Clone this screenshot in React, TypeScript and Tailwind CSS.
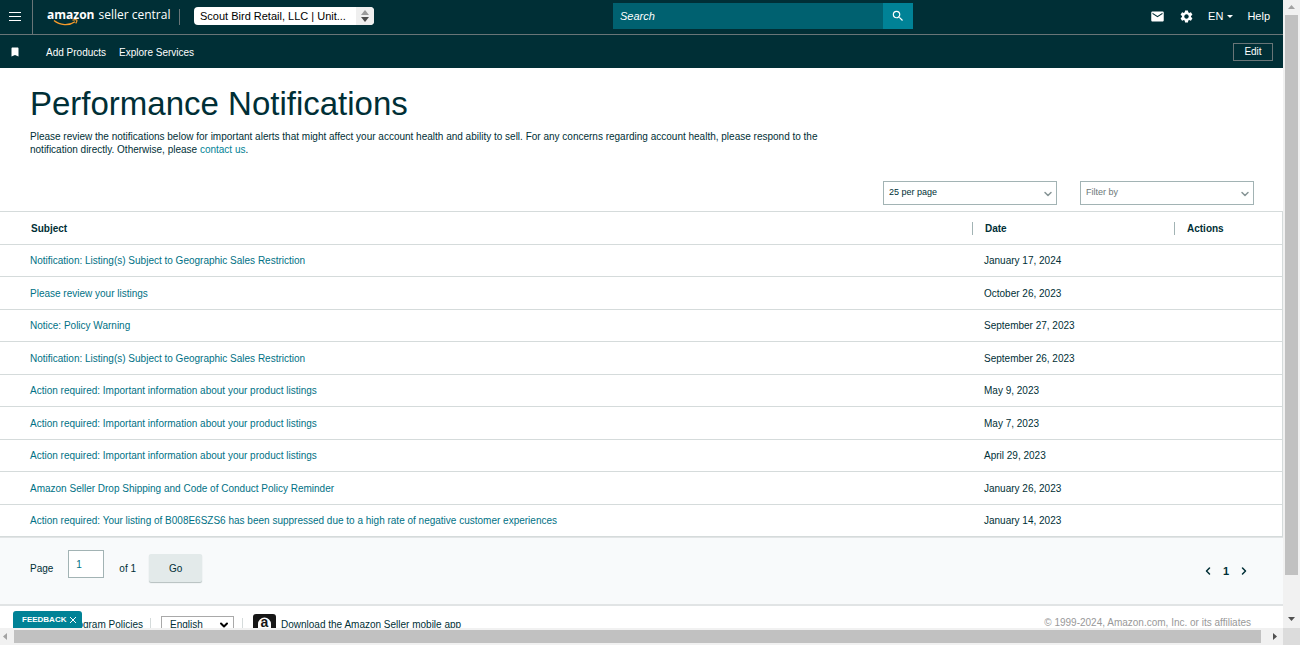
import { ChevronDown, ChevronLeft, ChevronRight } from 'lucide-react'
import { MdBookmark, MdEmail, MdSearch, MdSettings } from 'react-icons/md'

const notifications = [
  { subject: 'Notification: Listing(s) Subject to Geographic Sales Restriction', date: 'January 17, 2024' },
  { subject: 'Please review your listings', date: 'October 26, 2023' },
  { subject: 'Notice: Policy Warning', date: 'September 27, 2023' },
  { subject: 'Notification: Listing(s) Subject to Geographic Sales Restriction', date: 'September 26, 2023' },
  { subject: 'Action required: Important information about your product listings', date: 'May 9, 2023' },
  { subject: 'Action required: Important information about your product listings', date: 'May 7, 2023' },
  { subject: 'Action required: Important information about your product listings', date: 'April 29, 2023' },
  { subject: 'Amazon Seller Drop Shipping and Code of Conduct Policy Reminder', date: 'January 26, 2023' },
  {
    subject:
      'Action required: Your listing of B008E6SZS6 has been suppressed due to a high rate of negative customer experiences',
    date: 'January 14, 2023',
  },
]

function Logo() {
  return (
    <a
      href="#"
      className="relative mb-1 ml-3.5 flex items-baseline gap-1 font-['Open_Sans',sans-serif] text-[12px] leading-4 text-white"
    >
      <span className="font-bold">amazon</span>
      <span>seller central</span>
      <svg className="absolute left-1.5 top-3 h-2 w-7" viewBox="0 0 28 8" fill="none" stroke="#f79a2a" aria-hidden>
        <path d="M1 1.500c6 5 15 5.500 21 1.200" strokeWidth="1.400" />
        <path d="M19.500 1.200c1.600-.5 4-.4 4.300 0 .3.600-.2 2-1.100 3.200" strokeWidth="1.200" />
      </svg>
    </a>
  )
}

function TopBar() {
  return (
    <div className="flex h-[35px] items-center border-b border-[#697577]">
      <div className="flex h-full w-[613px] shrink-0 items-center">
        <button type="button" aria-label="Menu" className="flex h-full w-[33px] items-center border-r border-[#697577] pl-[9px]">
          <svg className="h-3 w-3" viewBox="0 0 12 12" fill="#fff" aria-hidden>
            <path d="M0 1h12v1H0zM0 5h12v1H0zM0 9h12v1H0z" />
          </svg>
        </button>
        <Logo />
        <span className="ml-auto h-4 w-px bg-[#697577]" />
        <div className="relative mb-0.5 ml-3.5 mr-[239px] flex h-[18px] w-[180px]">
          <select
            aria-label="Account"
            className="w-full appearance-none truncate rounded-sm bg-white pl-1.5 pr-5 text-[11px] leading-[18px] text-black"
          >
            <option>Scout Bird Retail, LLC | Unit...</option>
          </select>
          <span className="pointer-events-none absolute inset-y-0 right-0 flex w-[18px] items-center justify-center rounded-r-sm bg-[#efefef]">
            <svg className="h-3 w-2" viewBox="0 0 8 12" aria-hidden>
              <path d="M0 5h8L4 0z" fill="#9a9a9a" />
              <path d="M0 7h8l-4 5z" fill="#4d4d4d" />
            </svg>
          </span>
        </div>
      </div>
      <form className="mb-0.5 flex h-[26px] w-[300px] shrink-0">
        <input
          type="text"
          aria-label="Search"
          placeholder="Search"
          className="min-w-0 flex-1 bg-[#006170] px-[7px] text-[11px] italic text-white placeholder:text-white"
        />
        <button type="button" aria-label="Submit search" className="flex w-[30px] items-center justify-center bg-[#008296] text-white">
          <MdSearch size={14} />
        </button>
      </form>
      <div className="ml-auto flex items-center pb-0.5 pr-[13px] text-[11px] text-white">
        <a href="#" aria-label="Messages">
          <MdEmail size={15} />
        </a>
        <a href="#" aria-label="Settings" className="ml-3.5">
          <MdSettings size={15} />
        </a>
        <button type="button" className="ml-3.5 flex items-center gap-1">
          EN
          <svg className="h-[3px] w-1.5" viewBox="0 0 6 3" fill="#fff" aria-hidden>
            <path d="M0 0h6L3 3z" />
          </svg>
        </button>
        <a href="#" className="ml-3.5">
          Help
        </a>
      </div>
    </div>
  )
}

function BookmarkBar() {
  return (
    <nav className="flex h-[33px] items-center text-[10px] text-white">
      <MdBookmark size={12} className="ml-[9px]" />
      <a href="#" className="ml-[25px] pt-0.5">
        Add Products
      </a>
      <a href="#" className="ml-[13px] pt-0.5">
        Explore Services
      </a>
      <button type="button" className="ml-auto mr-2.5 h-[18px] w-10 border border-[#697577]">
        Edit
      </button>
    </nav>
  )
}

function FilterSelect({ label, value, className }: { label: string; value: string; className: string }) {
  return (
    <div className="relative flex h-6 w-[174px]">
      <select
        aria-label={label}
        className={`w-full appearance-none border border-[#a2b3b4] bg-white pb-0.5 pl-[5px] text-[9px] ${className}`}
      >
        <option>{value}</option>
      </select>
      <ChevronDown size={12} className="pointer-events-none absolute right-[3px] top-[7px] text-[#879596]" strokeWidth={3} />
    </div>
  )
}

function NotificationTable() {
  return (
    <table className="w-full table-fixed border-separate border-spacing-0 border-r border-t border-[#d5dbdb] text-left">
      <colgroup>
        <col />
        <col className="w-[202px]" />
        <col className="w-[108px]" />
      </colgroup>
      <thead>
        <tr className="h-[33px]">
          <th className="border-b border-[#d5dbdb] py-0 pl-[31px] font-bold">Subject</th>
          {['Date', 'Actions'].map((name) => (
            <th key={name} className="border-b border-[#d5dbdb] p-0 font-bold">
              <span className="block border-l border-[#a2b3b4] pl-3">{name}</span>
            </th>
          ))}
        </tr>
      </thead>
      <tbody>
        {notifications.map((item) => (
          <tr key={item.date} className="odd:h-8 even:h-[33px]">
            <td className="border-b border-[#d5dbdb] py-0 pl-[30px]">
              <a href="#" className="text-[#007185]">
                {item.subject}
              </a>
            </td>
            <td className="border-b border-[#d5dbdb] py-0 pl-3">{item.date}</td>
            <td className="border-b border-[#d5dbdb] p-0" />
          </tr>
        ))}
      </tbody>
    </table>
  )
}

function Pagination() {
  return (
    <div className="flex h-[69px] items-center justify-between border-b-2 border-t border-[#e1e4e5] bg-[#f8fafb] px-[30px]">
      <form className="flex items-center pb-1.5">
        <label htmlFor="page">Page</label>
        <input
          id="page"
          type="text"
          defaultValue="1"
          className="mb-2 ml-[15px] h-7 w-9 border border-[#a2b3b4] bg-white px-[7px] text-[#007185]"
        />
        <span className="ml-[15px]">of 1</span>
        <button type="button" className="ml-[13px] h-7 w-[53px] rounded-xs bg-[#e3eaea] shadow-[0_1px_1px_#b4bebe]">
          Go
        </button>
      </form>
      <div className="flex items-center gap-[9px] pr-[3px]">
        <button type="button" aria-label="Previous page">
          <ChevronLeft size={12} strokeWidth={3} />
        </button>
        <span className="text-[11px] font-bold">1</span>
        <button type="button" aria-label="Next page">
          <ChevronRight size={12} strokeWidth={3} />
        </button>
      </div>
    </div>
  )
}

function Footer() {
  return (
    <footer className="flex items-start pl-[61px] pr-8 pt-2 leading-4">
      <a href="#" className="mt-[3px] w-[82px] whitespace-nowrap text-right">
        Program Policies
      </a>
      <span className="ml-[7px] mt-1 h-4 w-px bg-[#d5dbdb]" />
      <div className="relative ml-2.5 mt-0.5 flex h-[18px] w-[73px]">
        <select aria-label="Language" className="w-full appearance-none border border-[#a9a9a9] bg-white pl-2 leading-4">
          <option>English</option>
        </select>
        <ChevronDown size={12} className="pointer-events-none absolute right-1 top-[3px] text-black" strokeWidth={4} />
      </div>
      <span className="ml-2 mt-1 h-4 w-px bg-[#d5dbdb]" />
      <a href="#" className="ml-2.5 flex gap-[5px]">
        <span className="relative flex h-[23px] w-[23px] justify-center rounded-[3px] bg-[#161616]">
          <svg className="absolute inset-0" viewBox="0 0 23 23" fill="#fff" aria-hidden>
            <path d="M5 21V10a6.500 6.500 0 0 1 13 0v11h-2l-1.500-2h-6L7 21z" />
          </svg>
          <span className="relative text-[14px] font-bold leading-4 text-[#161616]">a</span>
        </span>
        <span className="mt-[3px]">Download the Amazon Seller mobile app</span>
      </a>
      <span className="ml-auto mt-px text-[#999]">© 1999-2024, Amazon.com, Inc. or its affiliates</span>
    </footer>
  )
}

function VerticalScrollbar() {
  return (
    <div className="flex w-[17px] shrink-0 flex-col items-center bg-[#f1f1f1]" aria-hidden>
      <svg className="h-[15px] w-[17px] shrink-0" viewBox="0 0 17 15" fill="#a3a3a3">
        <path d="M5 9h7L8.500 5z" />
      </svg>
      <div className="mb-[38px] w-[13px] flex-1 bg-[#c1c1c1]" />
      <svg className="h-[15px] w-[17px] shrink-0" viewBox="0 0 17 15" fill="#505050">
        <path d="M5 4h7L8.500 8z" />
      </svg>
    </div>
  )
}

function HorizontalScrollbar() {
  return (
    <div className="flex h-[17px] shrink-0 items-center bg-[#f1f1f1]" aria-hidden>
      <svg className="h-[17px] w-3.5 shrink-0" viewBox="0 0 14 17" fill="#a3a3a3">
        <path d="M7 5v7L3 8.500z" />
      </svg>
      <div className="mr-2 h-[13px] flex-1 bg-[#c1c1c1]" />
      <svg className="h-[17px] w-3.5 shrink-0" viewBox="0 0 14 17" fill="#505050">
        <path d="M4 5v7l4-3.500z" />
      </svg>
      <div className="h-[17px] w-[17px] bg-[#dcdcdc]" />
    </div>
  )
}

export default function App() {
  return (
    <div className="flex h-screen flex-col bg-white font-['Liberation_Sans',Arial,sans-serif] text-[10px] leading-[13px] text-[#002f36]">
      <div className="flex min-h-0 flex-1">
        <div className="relative min-w-0 flex-1 overflow-hidden">
          <header className="bg-[#002f36]">
            <TopBar />
            <BookmarkBar />
          </header>
          <main>
            <section className="pl-[30px] pr-[29px] pt-4">
              <h1 className="text-[33px] leading-10">Performance Notifications</h1>
              <p className="mt-1.5 max-w-[790px]">
                Please review the notifications below for important alerts that might affect your account health and
                ability to sell. For any concerns regarding account health, please respond to the notification directly.
                Otherwise, please{' '}
                <a href="#" className="text-[#008296]">
                  contact us
                </a>
                .
              </p>
              <div className="mb-1.5 mt-[25px] flex justify-end gap-[23px]">
                <FilterSelect label="Results per page" value="25 per page" className="text-[#002f36]" />
                <FilterSelect label="Filter by" value="Filter by" className="text-[#6c7778]" />
              </div>
            </section>
            <NotificationTable />
            <Pagination />
          </main>
          <Footer />
          <div className="absolute bottom-0 left-[13px] flex h-[17px] w-[69px] items-center rounded-t-[3px] bg-[#008296] pl-[9px] text-[8px] font-bold text-white">
            <button type="button">FEEDBACK</button>
            <button type="button" aria-label="Close feedback" className="ml-1">
              <svg className="h-1.5 w-1.5" viewBox="0 0 6 6" stroke="#fff" aria-hidden>
                <path d="M0 0l6 6M6 0L0 6" />
              </svg>
            </button>
          </div>
        </div>
        <VerticalScrollbar />
      </div>
      <HorizontalScrollbar />
    </div>
  )
}
